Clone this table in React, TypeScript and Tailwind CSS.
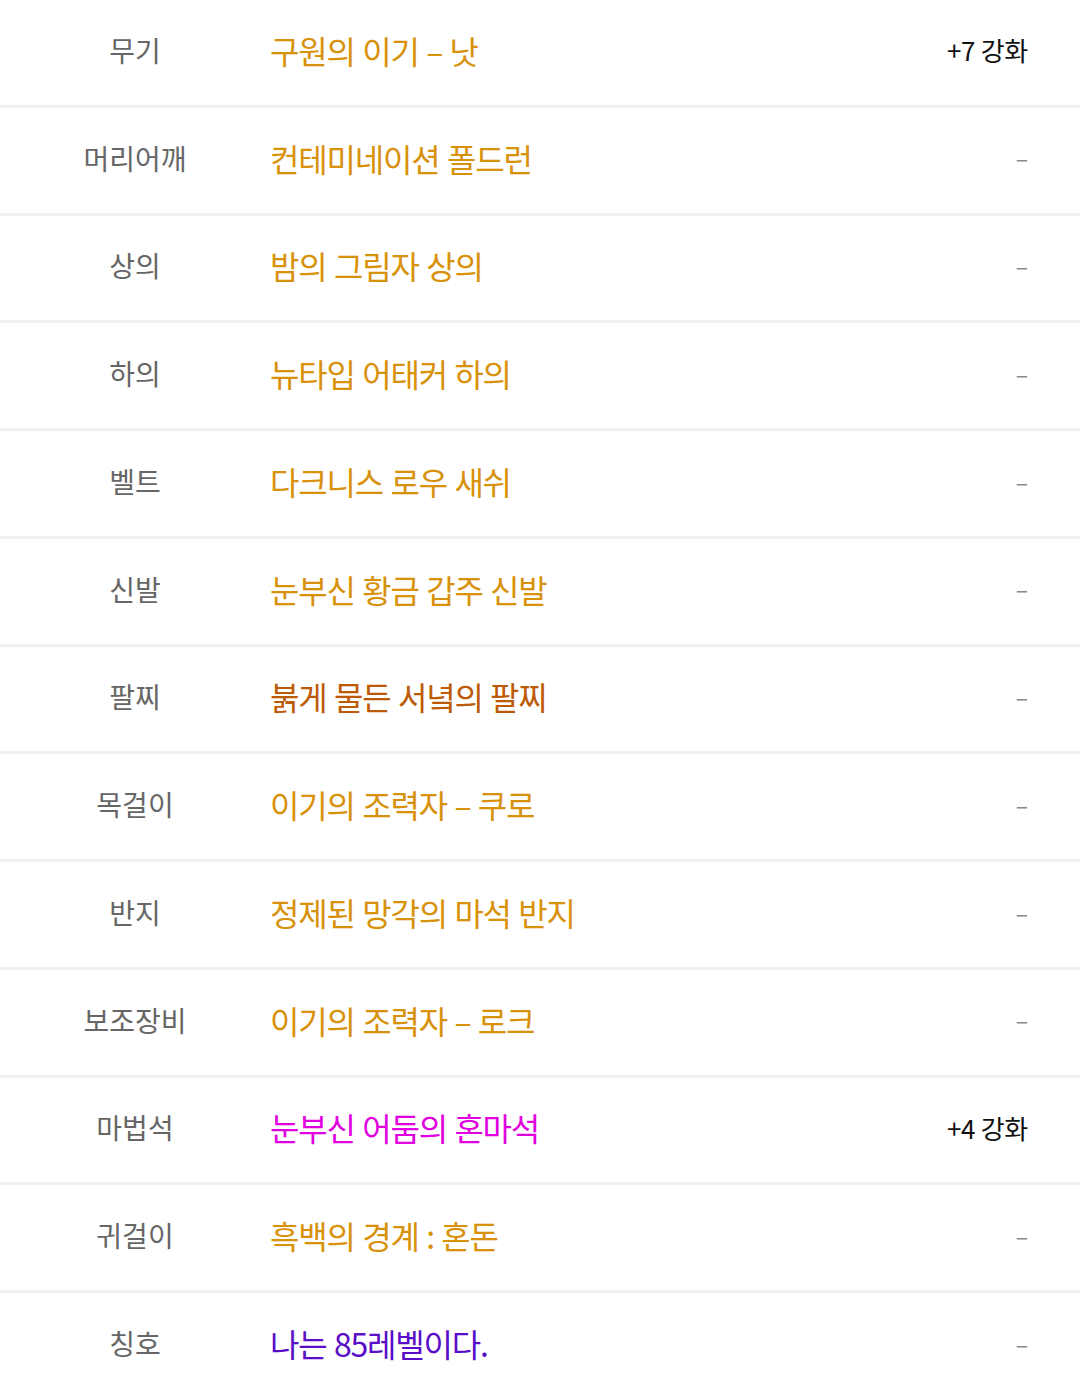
import type { FC } from "react";

type Item = {
  slot: string;
  name: string;
  color: string;
  extra?: string;
};

const items: Item[] = [
  { slot: "무기", name: "구원의 이기 – 낫", color: "text-[#d8910a]", extra: "+7 강화" },
  { slot: "머리어깨", name: "컨테미네이션 폴드런", color: "text-[#d8910a]" },
  { slot: "상의", name: "밤의 그림자 상의", color: "text-[#d8910a]" },
  { slot: "하의", name: "뉴타입 어태커 하의", color: "text-[#d8910a]" },
  { slot: "벨트", name: "다크니스 로우 새쉬", color: "text-[#d8910a]" },
  { slot: "신발", name: "눈부신 황금 갑주 신발", color: "text-[#d8910a]" },
  { slot: "팔찌", name: "붉게 물든 서녘의 팔찌", color: "text-[#bd5a06]" },
  { slot: "목걸이", name: "이기의 조력자 – 쿠로", color: "text-[#d8910a]" },
  { slot: "반지", name: "정제된 망각의 마석 반지", color: "text-[#d8910a]" },
  { slot: "보조장비", name: "이기의 조력자 – 로크", color: "text-[#d8910a]" },
  { slot: "마법석", name: "눈부신 어둠의 혼마석", color: "text-[#e000e0]", extra: "+4 강화" },
  { slot: "귀걸이", name: "흑백의 경계 : 혼돈", color: "text-[#d8910a]" },
  { slot: "칭호", name: "나는 85레벨이다.", color: "text-[#5a0ec8]" },
];

const Row: FC<{ item: Item }> = ({ item }) => {
  return (
    <div className="flex h-[107.75px] items-center border-b-[3px] border-[#f1f1f1] pb-[5px]">
      <div className="w-[270px] text-center text-[28px] text-[#666666]">{item.slot}</div>
      <div className={`flex-1 text-[32px] tracking-[-1.2px] [word-spacing:1.5px] ${item.color}`}>
        {item.name}
      </div>
      <div className="pr-[52px] text-right">
        {item.extra ? (
          <span className="text-[26px] tracking-[-0.3px] text-[#111111]">{item.extra}</span>
        ) : (
          <span className="text-[23px] text-[#888888]">–</span>
        )}
      </div>
    </div>
  );
};

export default function App() {
  return (
    <div
      className="w-[1080px] bg-white"
      style={{ fontFamily: '"Noto Sans CJK KR", "Noto Sans", sans-serif' }}
    >
      {items.map((item) => (
        <Row key={item.slot} item={item} />
      ))}
    </div>
  );
}
